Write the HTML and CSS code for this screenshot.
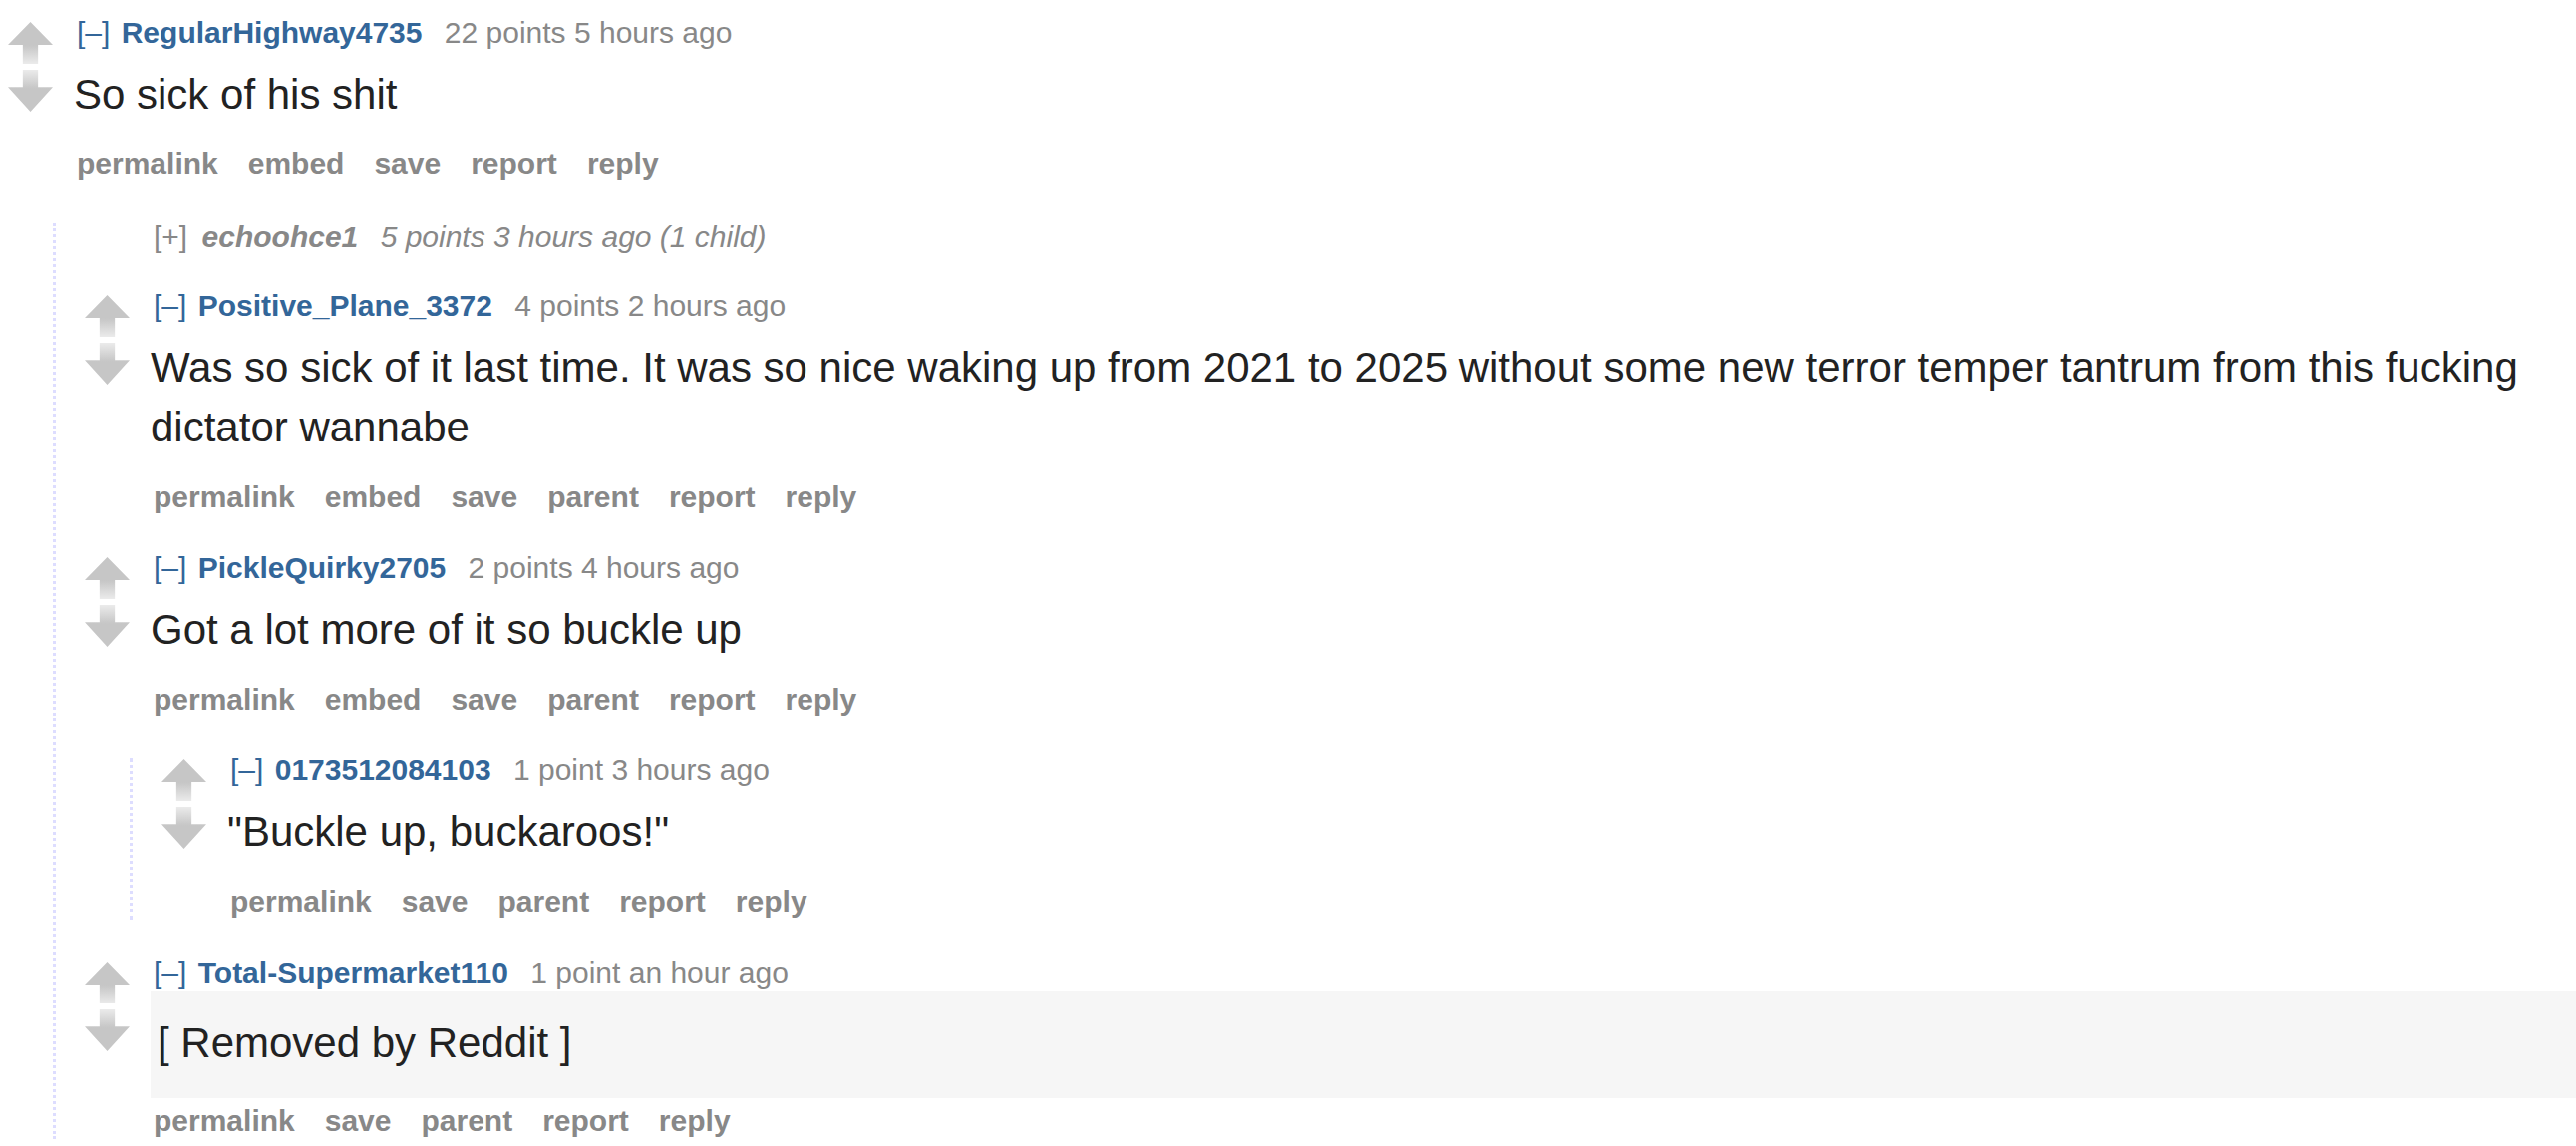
FILE: index.html
```html
<!DOCTYPE html>
<html>
<head>
<meta charset="utf-8">
<link rel="stylesheet" href="styles.css">
</head>
<body>
<div class="commentarea">
  <div class="comment">
    <div class="row">
      <div class="midcol"><div class="arrow up"></div><div class="arrow down"></div></div>
      <div class="entry">
        <p class="tagline"><a class="expand">[–]</a> <a class="author">RegularHighway4735</a> <span class="score">22 points</span> <time>5 hours ago</time></p>
        <div class="md"><p>So sick of his shit</p></div>
        <ul class="buttons"><li>permalink</li><li>embed</li><li>save</li><li>report</li><li>reply</li></ul>
      </div>
    </div>
    <div class="child">
      <div class="comment collapsed">
        <div class="row">
          <div class="midcol"></div>
          <div class="entry">
            <p class="tagline"><a class="expand">[+]</a> <a class="author">echoohce1</a> <span class="score">5 points</span> <time>3 hours ago</time> <span class="numchildren">(1 child)</span></p>
          </div>
        </div>
      </div>
      <div class="comment">
        <div class="row">
          <div class="midcol"><div class="arrow up"></div><div class="arrow down"></div></div>
          <div class="entry">
            <p class="tagline"><a class="expand">[–]</a> <a class="author">Positive_Plane_3372</a> <span class="score">4 points</span> <time>2 hours ago</time></p>
            <div class="md"><p>Was so sick of it last time. It was so nice waking up from 2021 to 2025 without some new terror temper tantrum from this fucking dictator wannabe</p></div>
            <ul class="buttons"><li>permalink</li><li>embed</li><li>save</li><li>parent</li><li>report</li><li>reply</li></ul>
          </div>
        </div>
      </div>
      <div class="comment">
        <div class="row">
          <div class="midcol"><div class="arrow up"></div><div class="arrow down"></div></div>
          <div class="entry">
            <p class="tagline"><a class="expand">[–]</a> <a class="author">PickleQuirky2705</a> <span class="score">2 points</span> <time>4 hours ago</time></p>
            <div class="md"><p>Got a lot more of it so buckle up</p></div>
            <ul class="buttons"><li>permalink</li><li>embed</li><li>save</li><li>parent</li><li>report</li><li>reply</li></ul>
          </div>
        </div>
        <div class="child">
          <div class="comment">
            <div class="row">
              <div class="midcol"><div class="arrow up"></div><div class="arrow down"></div></div>
              <div class="entry">
                <p class="tagline"><a class="expand">[–]</a> <a class="author">0173512084103</a> <span class="score">1 point</span> <time>3 hours ago</time></p>
                <div class="md"><p>"Buckle up, buckaroos!"</p></div>
                <ul class="buttons"><li>permalink</li><li>save</li><li>parent</li><li>report</li><li>reply</li></ul>
              </div>
            </div>
          </div>
        </div>
      </div>
      <div class="comment">
        <div class="row">
          <div class="midcol"><div class="arrow up"></div><div class="arrow down"></div></div>
          <div class="entry">
            <p class="tagline"><a class="expand">[–]</a> <a class="author">Total-Supermarket110</a> <span class="score">1 point</span> <time>an hour ago</time></p>
            <div class="md removed"><p>[ Removed by Reddit ]</p></div>
            <ul class="buttons tight"><li>permalink</li><li>save</li><li>parent</li><li>report</li><li>reply</li></ul>
          </div>
        </div>
      </div>
    </div>
  </div>
</div>
</body>
</html>
```

FILE: styles.css
```css
html, body {
  margin: 0;
  padding: 0;
  background: #ffffff;
}
body {
  font-family: "Liberation Sans", Arial, sans-serif;
  color: #222222;
  overflow: hidden;
}
.commentarea {
  padding-top: 21px;
}
.comment {
  padding-left: 8px;
}
.comment + .comment {
  margin-top: 41px;
}
.comment.collapsed {
  padding-top: 2px;
}
.comment.collapsed + .comment {
  margin-top: 45px;
}
.row {
  display: flex;
  align-items: flex-start;
}
.midcol {
  width: 45px;
  flex: 0 0 45px;
  margin-right: 21px;
  padding-top: 1px;
}
.arrow {
  width: 45px;
  height: 42px;
}
.arrow.up {
  background: linear-gradient(to bottom, #c6c6c6 0%, #c6c6c6 55%, #c9c9c9 60%, #ebebeb 100%);
  clip-path: polygon(50% 0, 100% 55%, 67% 55%, 67% 100%, 33% 100%, 33% 55%, 0 55%);
}
.arrow.down {
  margin-top: 6px;
  background: linear-gradient(to bottom, #ebebeb 0%, #c9c9c9 40%, #c6c6c6 45%, #c6c6c6 100%);
  clip-path: polygon(33% 0, 67% 0, 67% 41%, 100% 41%, 50% 100%, 0 41%, 33% 41%);
}
.entry {
  flex: 1 1 auto;
  min-width: 0;
}
.tagline {
  margin: 0;
  padding-left: 3px;
  font-size: 30px;
  line-height: 24px;
  color: #888888;
  white-space: nowrap;
}
.tagline .expand {
  color: #336699;
  margin-right: 3px;
}
.tagline .author {
  color: #336699;
  font-weight: bold;
  margin-right: 14px;
}
.collapsed .tagline {
  font-style: italic;
}
.collapsed .tagline .expand {
  color: #888888;
  font-style: normal;
  margin-right: 6px;
}
.collapsed .tagline .author {
  color: #888888;
  margin-right: 14px;
}
.md {
  margin-top: 20px;
}
.md p {
  margin: 0;
  font-size: 42px;
  line-height: 60px;
  color: #222222;
}
.md.removed {
  margin-top: 6px;
  padding: 23px 7px 25px;
  background: #f6f6f6;
}
.buttons {
  list-style: none;
  margin: 22px 0 0;
  padding: 0 0 0 2px;
  display: flex;
  gap: 28px;
  font-size: 30px;
  line-height: 36px;
  font-weight: bold;
  color: #888888;
}
.buttons li {
  padding: 0 1px;
}
.buttons.tight {
  margin-top: 5px;
}
.child {
  margin-top: 41px;
  margin-left: 45px;
  border-left: 3px dotted #ddddff;
  padding-left: 21px;
}
```
